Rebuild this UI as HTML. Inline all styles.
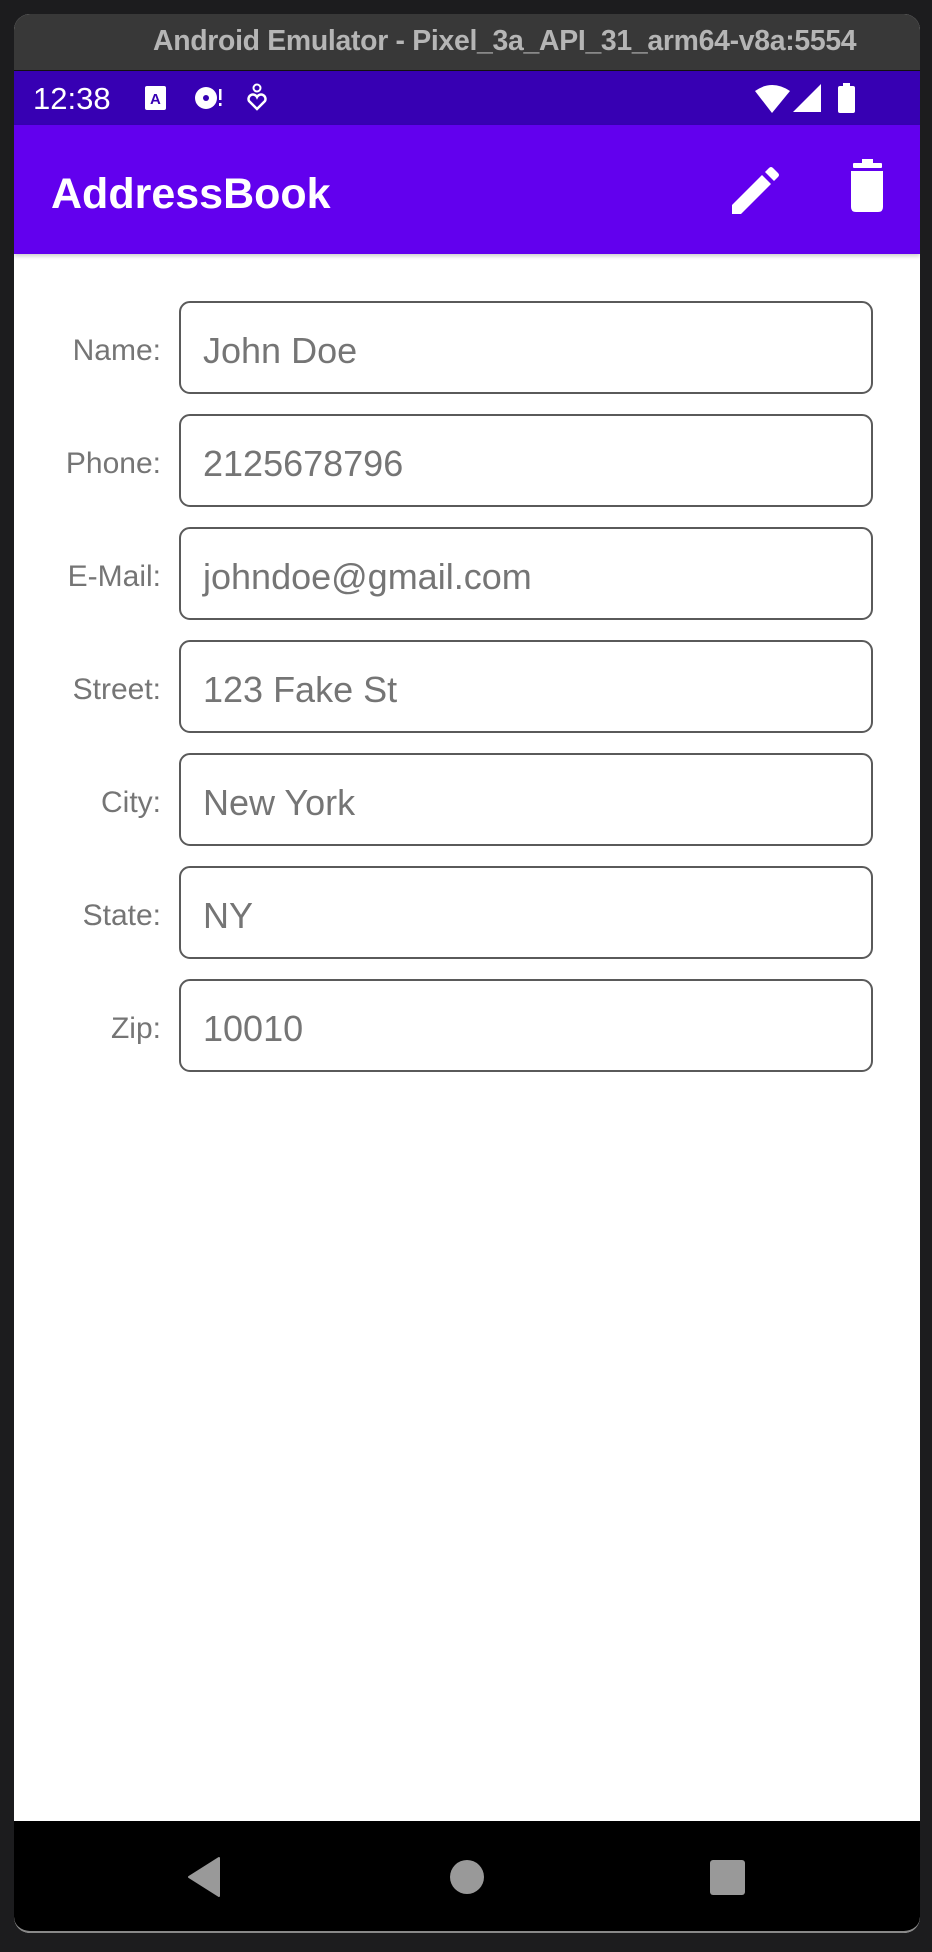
<!DOCTYPE html>
<html><head><meta charset="utf-8"><style>
*{margin:0;padding:0;box-sizing:border-box}
body{width:932px;height:1952px;background:#1c1c1e;position:relative;overflow:hidden;font-family:"Liberation Sans",sans-serif}
.win{position:absolute;left:14px;top:14px;width:906px;height:1919px;border-radius:16px;overflow:hidden;background:#fff}
.tb{position:absolute;left:0;top:0;width:100%;height:57px;background:#383838;border-bottom:1px solid #111}
.tb span{position:absolute;left:139px;top:11px;font-size:28.4px;font-weight:bold;color:#b5b5b5;white-space:nowrap;letter-spacing:-0.3px}
.sb{position:absolute;left:0;top:57px;width:100%;height:54px;background:#3700B3}
.ab{position:absolute;left:0;top:111px;width:100%;height:129px;background:#6200EE;box-shadow:0 2px 4px rgba(0,0,0,.2)}
.ab .t{position:absolute;left:37px;top:48px;font-size:43px;font-weight:bold;color:#fff;line-height:1}
.lbl{position:absolute;right:calc(932px - 161px);font-size:30px;color:#757575;text-align:right}
.f{position:absolute;left:179px;width:694px;height:93px;border:2.5px solid #5a5a5a;border-radius:11px}
.f span{position:absolute;left:22px;top:30px;font-size:36px;color:#757575;line-height:1}
</style></head><body>
<div class="win">
<div class="tb"><span>Android Emulator - Pixel_3a_API_31_arm64-v8a:5554</span></div>
<div class="sb">
<span style="position:absolute;left:19px;top:12px;font-size:31px;color:#fff;line-height:1">12:38</span>
<svg style="position:absolute;left:0;top:0" width="906" height="54">
<rect x="131" y="15" width="21" height="24" rx="2" fill="#fff"/><text x="136" y="33" font-size="15" font-weight="bold" fill="#3700B3" font-family="Liberation Sans">A</text>
<circle cx="192" cy="27" r="11" fill="#fff"/><circle cx="192" cy="27" r="3" fill="#3700B3"/><rect x="205" y="18" width="2.5" height="11" fill="#fff"/><rect x="205" y="32" width="2.5" height="3" fill="#fff"/>
<circle cx="243" cy="17" r="3.5" fill="none" stroke="#fff" stroke-width="2"/><path d="M243 38 L235 30 A4 4 0 0 1 243 26 A4 4 0 0 1 251 30 Z" fill="none" stroke="#fff" stroke-width="2.5"/>
<path d="M741 20 Q758 8 776 20 L758 42 Z" fill="#fff"/>
<path d="M807 13 L807 41 L779 41 Z" fill="#fff"/>
<rect x="824" y="15" width="17" height="27" rx="2" fill="#fff"/><rect x="829" y="12" width="7" height="4" fill="#fff"/>
</svg></div>
<div class="ab"><div class="t">AddressBook</div>
<svg style="position:absolute;left:0;top:0" width="906" height="129">
<path d="M718 89 L718 80 L748 50 L757 59 L727 89 Z" fill="#fff"/><path d="M751 47 L755 43 Q757 41 759 43 L764 48 Q766 50 764 52 L760 56 Z" fill="#fff"/>
<rect x="839" y="38" width="29" height="5" rx="1" fill="#fff"/><rect x="848" y="34" width="11" height="5" fill="#fff"/><path d="M837 46 H869 V82 Q869 87 864 87 H842 Q837 87 837 82 Z" fill="#fff"/>
</svg></div>
</div>
<div class="lbl" style="top:334px">Name:</div>
<div class="f" style="top:301px"><span>John Doe</span></div>
<div class="lbl" style="top:447px">Phone:</div>
<div class="f" style="top:414px"><span>2125678796</span></div>
<div class="lbl" style="top:560px">E-Mail:</div>
<div class="f" style="top:527px"><span>johndoe@gmail.com</span></div>
<div class="lbl" style="top:673px">Street:</div>
<div class="f" style="top:640px"><span>123 Fake St</span></div>
<div class="lbl" style="top:786px">City:</div>
<div class="f" style="top:753px"><span>New York</span></div>
<div class="lbl" style="top:899px">State:</div>
<div class="f" style="top:866px"><span>NY</span></div>
<div class="lbl" style="top:1012px">Zip:</div>
<div class="f" style="top:979px"><span>10010</span></div>
<div style="position:absolute;left:14px;top:1821px;width:906px;height:112px;background:#000;border-radius:0 0 16px 16px;border-bottom:2px solid #888">
<svg width="906" height="112" style="position:absolute;left:0;top:0">
<path d="M205 37 L205 75 L175 56 Z" fill="#999" stroke="#999" stroke-width="2" stroke-linejoin="round"/>
<ellipse cx="453" cy="56" rx="17" ry="17" fill="#999"/>
<rect x="696" y="39" width="35" height="35" rx="3" fill="#999"/>
</svg></div>
</body></html>
